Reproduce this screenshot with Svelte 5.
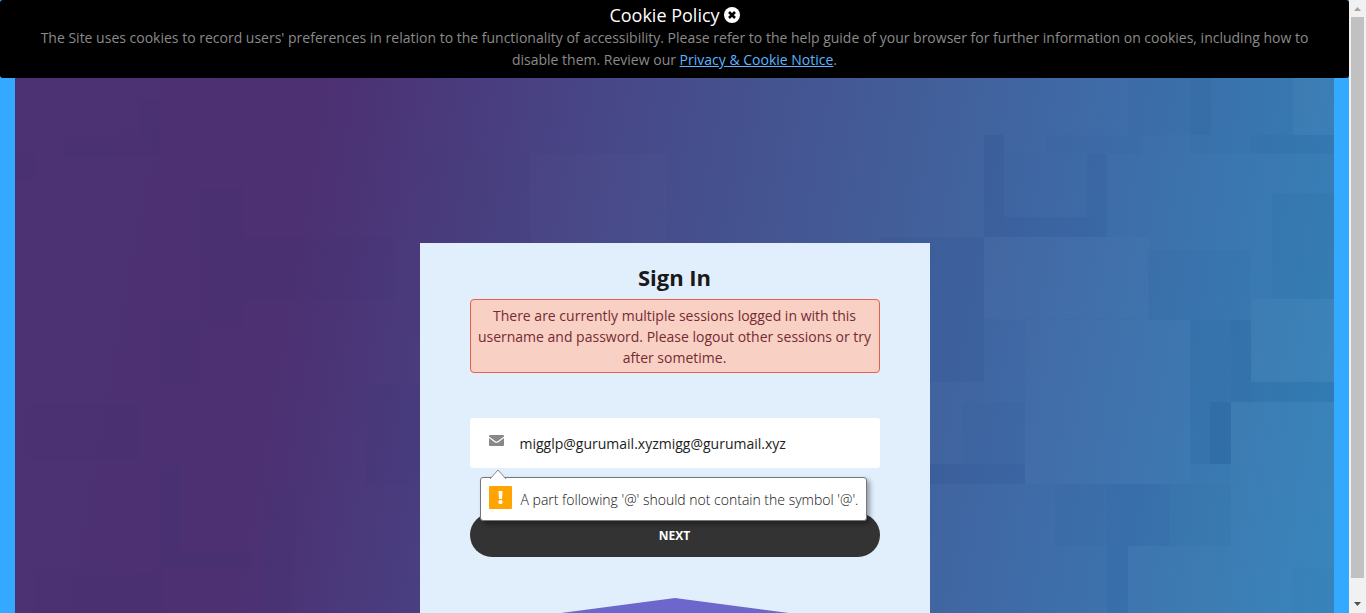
<script>
  let bannerOpen = $state(true);
  let email = $state('migglp@gurumail.xyzmigg@gurumail.xyz');

  // Background tiles: [x, y, width, height, opacity]; negative opacity is a dark tile.
  const tiles = [
    [1175, 0, 21, 57, -0.08],
    [1128, 0, 47, 57, -0.02],
    [1196, 0, 82, 57, -0.02],
    [1278, 0, 41, 57, 0.02],
    [1236, 57, 83, 19, -0.06],
    [1175, 57, 61, 19, -0.02],
    [1113, 0, 15, 76, -0.03],
    [1030, 57, 83, 19, -0.03],
    [969, 57, 20, 102, -0.07],
    [989, 139, 103, 20, -0.07],
    [1072, 76, 20, 63, -0.06],
    [989, 76, 83, 63, -0.01],
    [1257, 115, 62, 106, -0.04],
    [865, 159, 104, 145, -0.05],
    [969, 159, 165, 82, 0.015],
    [1133, 172, 103, 70, -0.03],
    [1236, 221, 83, 83, 0.025],
    [1010, 242, 165, 164, 0.02],
    [1175, 242, 41, 144, -0.06],
    [1216, 242, 20, 82, -0.09],
    [1236, 304, 83, 20, -0.08],
    [1195, 324, 21, 62, -0.08],
    [1216, 324, 103, 144, 0.02],
    [948, 324, 62, 62, -0.02],
    [865, 386, 145, 20, -0.07],
    [1092, 406, 62, 62, -0.05],
    [1092, 468, 21, 67, -0.05],
    [1040, 406, 52, 62, -0.02],
    [1154, 406, 62, 62, -0.01],
    [1113, 468, 206, 67, 0.02],
    [1277, 489, 42, 46, -0.02],
    [405, 76, 110, 89, -0.01],
    [515, 76, 137, 89, 0.01],
    [652, 0, 145, 76, 0.005],
    [797, 76, 90, 63, 0.005],
    [124, 23, 21, 54, -0.02],
    [47, 57, 77, 20, -0.02],
    [186, 109, 43, 139, -0.01],
    [229, 159, 150, 63, -0.02],
    [0, 76, 20, 27, -0.02],
    [144, 243, 41, 62, -0.02],
    [15, 327, 110, 56, -0.01],
    [144, 388, 22, 84, -0.03],
    [144, 472, 92, 20, -0.04],
    [248, 409, 32, 126, -0.02],
    [350, 306, 55, 102, -0.02],
    [20, 492, 130, 43, -0.01]
  ];
</script>

<div class="page">
  <main>
    {#if bannerOpen}
      <section class="cookie" aria-label="Cookie Policy">
        <h2>
          Cookie Policy
          <button class="close" aria-label="Close" onclick={() => (bannerOpen = false)}>
            <svg viewBox="0 0 16 16" width="16" height="16">
              <circle cx="8" cy="8" r="8" fill="#fff" />
              <path d="M5 5 11 11M11 5 5 11" stroke="#000" stroke-width="2.6" />
            </svg>
          </button>
        </h2>
        <p>
          The Site uses cookies to record users' preferences in relation to the functionality of
          accessibility. Please refer to the help guide of your browser for further information on
          cookies, including how to disable them. Review our
          <a href="#privacy">Privacy &amp; Cookie Notice</a>.
        </p>
      </section>
    {/if}

    <div class="hero">
      <svg class="backdrop" viewBox="0 0 1319 535" preserveAspectRatio="none" aria-hidden="true">
        <defs>
          <linearGradient id="sky" gradientUnits="userSpaceOnUse" x1="0" y1="0" x2="1370" y2="244">
            <stop offset="0" stop-color="#4c3173" />
            <stop offset="0.22" stop-color="#4c3072" />
            <stop offset="0.3" stop-color="#4a397b" />
            <stop offset="0.44" stop-color="#474989" />
            <stop offset="0.65" stop-color="#425f9a" />
            <stop offset="0.79" stop-color="#3e6da9" />
            <stop offset="0.92" stop-color="#397bb3" />
            <stop offset="1" stop-color="#3584bc" />
          </linearGradient>
        </defs>
        <rect width="1319" height="535" fill="url(#sky)" />
        {#each tiles as [x, y, w, h, o]}
          <rect {x} {y} width={w} height={h} fill={o < 0 ? '#003070' : '#ffffff'} opacity={Math.abs(o)} />
        {/each}
      </svg>

      <form class="card" novalidate onsubmit={(e) => e.preventDefault()}>
        <h1>Sign In</h1>
        <p class="error" role="alert">
          There are currently multiple sessions logged in with this username and password. Please
          logout other sessions or try after sometime.
        </p>

        <div class="field">
          <label for="email" aria-label="Email">
            <svg viewBox="0 0 15 12" width="15" height="12">
              <rect width="15" height="11" rx="1" fill="#888" />
              <path d="M0 2.2 6 6.7Q7.5 7.8 9 6.7L15 2.2" fill="none" stroke="#fff" stroke-width="1.2" />
            </svg>
          </label>
          <input id="email" type="email" bind:value={email} />
          <div class="bubble" role="tooltip">
            <svg class="arrow" viewBox="0 0 18 10" width="18" height="10">
              <path d="M1 10 9 1 17 10" fill="#fff" stroke="#888" />
            </svg>
            <svg class="warn" viewBox="0 0 23 23" width="23" height="23">
              <rect width="23" height="23" rx="1" fill="#ffa400" />
              <path d="M9.500 5h4l-.5 8h-3z" fill="#fff" />
              <rect x="9.500" y="14" width="4" height="4" rx="1.500" fill="#fff" />
            </svg>
            <span>A part following '@' should not contain the symbol '@'.</span>
          </div>
        </div>

        <button class="next" type="submit">NEXT</button>

        <svg class="peak" viewBox="0 0 410 120" aria-hidden="true">
          <path d="M205 0 410 27V120H0V27Z" fill="#6d66cc" />
        </svg>
      </form>
    </div>
  </main>

  <div class="scrollbar" aria-hidden="true">
    <svg viewBox="0 0 17 17" width="17" height="17"><path d="M5 11 8.500 7 12 11z" fill="#a3a3a3" /></svg>
    <div class="thumb"></div>
    <svg viewBox="0 0 17 17" width="17" height="17"><path d="M5 6 8.500 10 12 6z" fill="#505050" /></svg>
  </div>
</div>

<style>
  :global(body) {
    margin: 0;
    font-family: 'Open Sans', 'Noto Sans', sans-serif;
    font-size: 14px;
  }

  .page {
    display: flex;
    height: 100vh;
    overflow: hidden;
  }

  main {
    flex: 1;
    min-width: 0;
    display: flex;
    flex-direction: column;
    overflow: hidden;
    background: #33aaff;
  }

  .cookie {
    box-sizing: border-box;
    padding: 4px 24px 7px;
    border-radius: 3px;
    background: #000;
    color: #8a8a8a;
    text-align: center;
  }

  .cookie h2 {
    display: flex;
    justify-content: center;
    align-items: center;
    gap: 4px;
    margin: 0 0 1px;
    color: #fff;
    font-size: 18px;
    font-weight: 400;
    line-height: 22px;
  }

  .cookie p {
    margin: 0;
    line-height: 22px;
  }

  .cookie a {
    color: #5cb3ff;
  }

  .close {
    display: flex;
    padding: 0;
    border: 0;
    background: none;
    cursor: pointer;
  }

  .hero {
    position: relative;
    flex: 1;
    min-height: 0;
    margin: 0 15px;
    padding-top: 165px;
    overflow: hidden;
  }

  .backdrop {
    position: absolute;
    inset: 0;
    width: 100%;
    height: 100%;
  }

  .card {
    position: relative;
    box-sizing: border-box;
    display: flex;
    flex-direction: column;
    max-width: 510px;
    margin: 0 auto;
    padding: 20px 50px 0;
    background: #e1effd;
  }

  h1 {
    margin: 0 0 8px;
    color: #1a1a1a;
    font-size: 22px;
    line-height: 28px;
    text-align: center;
  }

  .error {
    margin: 0;
    padding: 5px 6px 4px;
    border: 1px solid #e9604a;
    border-radius: 4px;
    background: #f9d0c4;
    color: #752b33;
    line-height: 21px;
    text-align: center;
  }

  .field {
    position: relative;
    display: flex;
    height: 50px;
    margin-top: 45px;
    border-radius: 3px;
    background: #fff;
  }

  .field label {
    display: flex;
    padding: 17px 0 0 19px;
  }

  .field input {
    flex: 1;
    min-width: 0;
    padding: 0 16px;
    border: 0;
    outline: 0;
    background: none;
    color: #222;
    font: inherit;
  }

  .bubble {
    position: absolute;
    z-index: 1;
    top: 59px;
    left: 10px;
    box-sizing: border-box;
    display: flex;
    gap: 9px;
    height: 44px;
    padding: 8px;
    border: 1px solid #777;
    border-radius: 3px;
    background: #fff;
    box-shadow: 3px 3px 5px rgba(0, 0, 0, 0.35);
    color: #111;
    font-weight: 330;
    line-height: 27px;
    white-space: nowrap;
  }

  .arrow {
    position: absolute;
    top: -9px;
    left: 8px;
  }

  .next {
    height: 44px;
    margin-top: 45px;
    padding: 0;
    border: 0;
    border-radius: 22px;
    background: #333;
    color: #fff;
    font: 700 12px 'Open Sans', 'Noto Sans', sans-serif;
    cursor: pointer;
  }

  .peak {
    display: block;
    width: 100%;
    margin-top: 41px;
  }

  .scrollbar {
    display: flex;
    flex-direction: column;
    width: 17px;
    background: #f1f1f1;
  }

  .scrollbar svg {
    flex: none;
  }

  .thumb {
    flex: 1;
    margin: 0 2px 18px;
    background: #c1c1c1;
  }
</style>
